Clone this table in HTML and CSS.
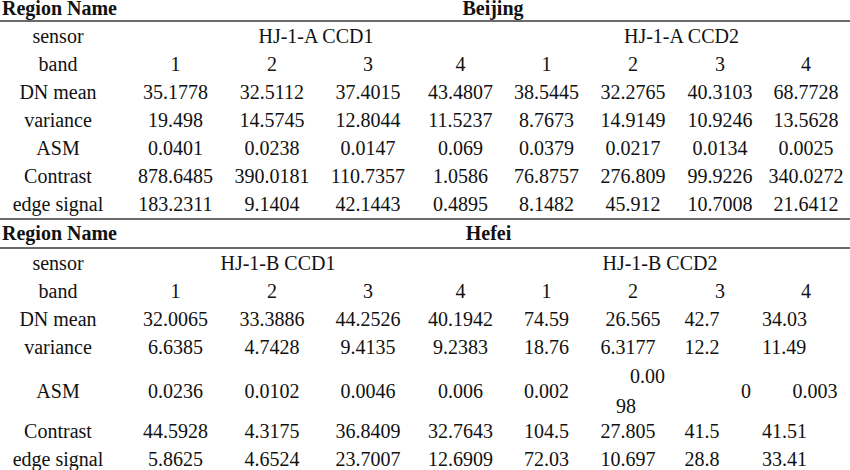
FILE: index.html
```html
<!DOCTYPE html>
<html>
<head>
<meta charset="utf-8">
<link rel="stylesheet" href="styles.css">
</head>
<body>
<div class="tbl">
  <div class="row head top">
    <div class="rn">Region Name</div>
    <div class="span8 city bj">Beijing</div>
  </div>
  <div class="rule"></div>
  <div class="row">
    <div class="lbl">sensor</div>
    <div class="span4">HJ-1-A CCD1</div>
    <div class="span4 a2">HJ-1-A CCD2</div>
  </div>
  <div class="row">
    <div class="lbl">band</div>
    <div>1</div><div>2</div><div>3</div><div>4</div><div>1</div><div>2</div><div>3</div><div>4</div>
  </div>
  <div class="row">
    <div class="lbl">DN mean</div>
    <div>35.1778</div><div>32.5112</div><div>37.4015</div><div>43.4807</div><div>38.5445</div><div>32.2765</div><div>40.3103</div><div>68.7728</div>
  </div>
  <div class="row">
    <div class="lbl">variance</div>
    <div>19.498</div><div>14.5745</div><div>12.8044</div><div>11.5237</div><div>8.7673</div><div>14.9149</div><div>10.9246</div><div>13.5628</div>
  </div>
  <div class="row">
    <div class="lbl">ASM</div>
    <div>0.0401</div><div>0.0238</div><div>0.0147</div><div>0.069</div><div>0.0379</div><div>0.0217</div><div>0.0134</div><div>0.0025</div>
  </div>
  <div class="row">
    <div class="lbl">Contrast</div>
    <div>878.6485</div><div>390.0181</div><div>110.7357</div><div>1.0586</div><div>76.8757</div><div>276.809</div><div>99.9226</div><div>340.0272</div>
  </div>
  <div class="row">
    <div class="lbl">edge signal</div>
    <div>183.2311</div><div>9.1404</div><div>42.1443</div><div>0.4895</div><div>8.1482</div><div>45.912</div><div>10.7008</div><div>21.6412</div>
  </div>
  <div class="rule"></div>
  <div class="row head mid">
    <div class="rn">Region Name</div>
    <div class="span8 city">Hefei</div>
  </div>
  <div class="rule"></div>
  <div class="row">
    <div class="lbl">sensor</div>
    <div class="span4 b1">HJ-1-B CCD1</div>
    <div class="span4 b2">HJ-1-B CCD2</div>
  </div>
  <div class="row">
    <div class="lbl">band</div>
    <div>1</div><div>2</div><div>3</div><div>4</div><div>1</div><div>2</div><div>3</div><div>4</div>
  </div>
  <div class="row">
    <div class="lbl">DN mean</div>
    <div>32.0065</div><div>33.3886</div><div>44.2526</div><div>40.1942</div><div>74.59</div><div>26.565</div><div class="c7">42.7</div><div class="c8">34.03</div>
  </div>
  <div class="row">
    <div class="lbl">variance</div>
    <div>6.6385</div><div>4.7428</div><div>9.4135</div><div>9.2383</div><div>18.76</div><div class="c6">6.3177</div><div class="c7">12.2</div><div class="c8">11.49</div>
  </div>
  <div class="row tall">
    <div class="lbl">ASM</div>
    <div>0.0236</div><div>0.0102</div><div>0.0046</div><div>0.006</div><div>0.002</div>
    <div class="split"><span class="l1">0.00</span><span class="l2">98</span></div>
    <div class="z7">0</div><div class="z8">0.003</div>
  </div>
  <div class="row">
    <div class="lbl">Contrast</div>
    <div>44.5928</div><div>4.3175</div><div>36.8409</div><div>32.7643</div><div>104.5</div><div class="c6">27.805</div><div class="c7">41.5</div><div class="c8">41.51</div>
  </div>
  <div class="row">
    <div class="lbl">edge signal</div>
    <div>5.8625</div><div>4.6524</div><div>23.7007</div><div>12.6909</div><div>72.03</div><div class="c6">10.697</div><div class="c7">28.8</div><div class="c8">33.41</div>
  </div>
</div>
</body>
</html>
```
FILE: styles.css
```css
html, body {
  margin: 0;
  padding: 0;
  background: #ffffff;
}
body {
  font-family: "Liberation Serif", "Times New Roman", serif;
  font-size: 20px;
  color: #111111;
}
.tbl {
  width: 850px;
}
.row {
  display: grid;
  grid-template-columns: 127px 97px 96px 96px 89px 83px 90px 84px 88px;
  height: 28px;
  align-items: center;
  text-align: center;
  white-space: nowrap;
  line-height: 28px;
}
.row.top {
  height: 20px;
  line-height: 16px;
  align-items: start;
}
.row.mid {
  height: 27px;
  line-height: 27px;
}
.row.tall {
  height: 56px;
}
.rule {
  height: 2px;
  background: #6a6a6a;
}
.head {
  font-weight: bold;
}
.rn {
  text-align: left;
  padding-left: 2px;
}
.lbl {
  padding-right: 11px;
}
.span8 {
  grid-column: span 8;
}
.span4 {
  grid-column: span 4;
}
.bj {
  padding-left: 9px;
}
.a2 {
  padding-left: 8px;
}
.b1 {
  padding-right: 76px;
}
.b2 {
  padding-right: 35px;
}
.c6 {
  padding-right: 10px;
}
.c7 {
  padding-right: 36px;
}
.c8 {
  padding-right: 54px;
}
.z7 {
  padding-left: 52px;
}
.z8 {
  padding-left: 18px;
}
.split {
  display: flex;
  flex-direction: column;
  align-items: flex-start;
  padding-left: 28px;
  line-height: 30px;
}
.split .l1 {
  padding-left: 14px;
}
```
